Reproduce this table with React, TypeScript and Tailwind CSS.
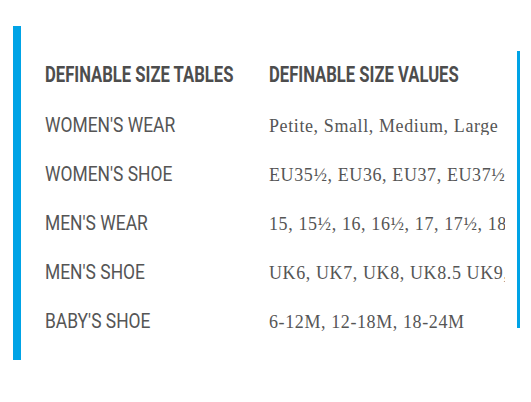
const ROWS: [string, string][] = [
  ["WOMEN'S WEAR", "Petite, Small, Medium, Large"],
  ["WOMEN'S SHOE", "EU35½, EU36, EU37, EU37½, EU38, EU39"],
  ["MEN'S WEAR", "15, 15½, 16, 16½, 17, 17½, 18, 19, 20"],
  ["MEN'S SHOE", "UK6, UK7, UK8, UK8.5 UK9, UK10"],
  ["BABY'S SHOE", "6-12M, 12-18M, 18-24M"],
];

const sans = "inline-block whitespace-nowrap origin-left font-['Roboto',sans-serif]";

export default function App() {
  return (
    <div className="w-[531px] h-[402px] bg-white pt-[26px] pl-[13px]">
      <div className="flex">
        <div className="w-[8px] h-[334px] bg-[#00a3e6]" />
        <div className="w-[496px] pl-[24px] pt-[38px]">
          <div className="grid grid-cols-[224px_236px] h-[37px] text-[#4d4d4d]">
            <div><span className={`${sans} scale-x-[0.756] text-[22px] font-bold leading-none`}>DEFINABLE SIZE TABLES</span></div>
            <div><span className={`${sans} scale-x-[0.756] text-[22px] font-bold leading-none`}>DEFINABLE SIZE VALUES</span></div>
          </div>
          {ROWS.map(([label, value]) => (
            <div key={label} className="grid grid-cols-[224px_236px] h-[49px] items-center text-[#555]">
              <div><span className={`${sans} scale-x-[0.83] text-[21px] leading-none`}>{label}</span></div>
              <div className="text-[18px] tracking-[0.6px] leading-none whitespace-nowrap overflow-hidden font-['Liberation_Serif',serif]">
                {value}
              </div>
            </div>
          ))}
        </div>
        <div className="w-[3px] h-[277px] mt-[25px] bg-[#00a3e6]" />
      </div>
    </div>
  );
}
